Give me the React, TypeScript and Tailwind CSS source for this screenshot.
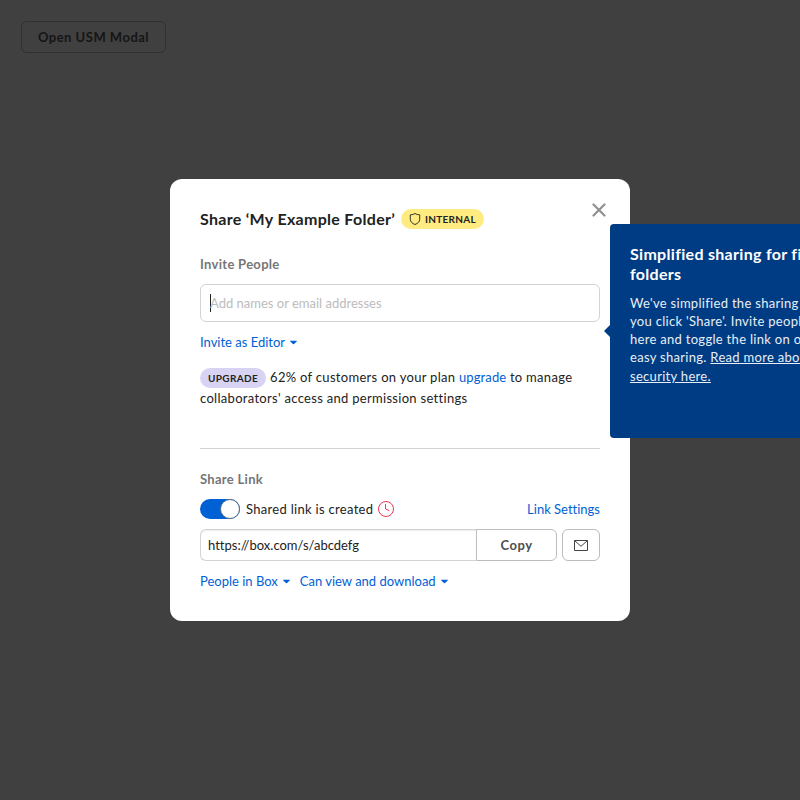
import React from "react";

function Caret() {
  return (
    <svg className="ml-[5px] h-[4px] w-[7px] translate-y-[0.5px]" viewBox="0 0 7 4" fill="#0061d5">
      <path d="M.4 0h6.200a.4.4 0 0 1 .3.650L3.800 3.800a.4.4 0 0 1-.6 0L.1.650A.4.4 0 0 1 .4 0Z" />
    </svg>
  );
}

function MenuLink({ children }: { children: React.ReactNode }) {
  return (
    <button className="flex h-5 items-center text-[13px] leading-5 whitespace-nowrap text-[#0061d5]">
      <span>{children}</span>
      <Caret />
    </button>
  );
}

function Shield() {
  return (
    <svg className="mr-1 h-3 w-3" viewBox="0 0 12 12" fill="none" stroke="#222" strokeWidth="0.9" strokeLinejoin="round">
      <path d="M6 .5C7.200 1.400 8.900 1.800 10.700 1.800v4.400c0 2.500-1.900 4.300-4.700 5.300C3.200 10.500 1.300 8.700 1.300 6.200V1.800C3.100 1.800 4.800 1.400 6 .5Z" />
    </svg>
  );
}

export default function App() {
  return (
    <div className="relative h-[800px] w-[800px] overflow-hidden bg-[#404040] font-['Lato',sans-serif] text-[13px] leading-5 tracking-[0.3px] text-[#222] [font-variant-ligatures:none]">
      <div className="flex px-[21px] pt-[21px]">
        <button className="h-8 w-[145px] rounded-[6px] border border-[#303030] text-[13px] font-bold tracking-[0.5px] whitespace-nowrap text-[#151515]">Open USM Modal</button>
      </div>

      <section className="relative mx-auto mt-[126px] h-[442px] w-[460px] rounded-[12px] bg-white px-[30px] pt-[30px]">
        <header className="flex h-5 items-center justify-between">
          <div className="flex items-center">
            <h1 className="w-[195px] text-base leading-5 font-bold whitespace-nowrap">Share ‘My Example Folder’</h1>
            <span className="ml-[6px] flex h-5 items-center rounded-full bg-[#ffeb7f] px-2 text-[10px] font-bold tracking-[0.3px]">
              <Shield />
              INTERNAL
            </span>
          </div>
          <button className="-mt-[18px] -mr-[6px]" aria-label="Close">
            <svg className="h-[14px] w-[14px]" viewBox="0 0 14 14" stroke="#909090" strokeWidth="2.2" strokeLinecap="round">
              <path d="M1.500 1.500 12.500 12.500M12.500 1.500 1.500 12.500" />
            </svg>
          </button>
        </header>

        <label className="mt-[25px] block h-5 font-bold text-[#767676]">Invite People</label>
        <div className="mt-[10px] flex h-[38px] items-center rounded-[6px] border border-[#d3d3d3] px-[9px]">
          <span className="h-[18px] w-px bg-[#222]" />
          <span className="-ml-px tracking-[0px] text-[#bcbcbc]">Add names or email addresses</span>
        </div>
        <div className="mt-[10px] flex tracking-[0px]">
          <MenuLink>Invite as Editor</MenuLink>
        </div>
        <p className="mt-[15px] leading-[21px]">
          <span className="mr-1 inline-block h-5 rounded-full bg-[#d9d3f3] px-2 text-[10px] leading-5 font-bold tracking-[0.35px]">UPGRADE</span>
          62% of customers on your plan <a className="tracking-[0.1px] text-[#0061d5]">upgrade</a> to manage collaborators' access and permission settings
        </p>
        <hr className="mt-[39px] border-[#d3d3d3]" />

        <h2 className="mt-5 h-5 font-bold text-[#767676]">Share Link</h2>
        <div className="mt-[10px] flex h-5 items-center">
          <span className="flex h-5 w-10 justify-end rounded-full bg-[#0061d5]">
            <span className="h-5 w-5 rounded-full border border-[#5b6c84] bg-white" />
          </span>
          <span className="ml-[6px] whitespace-nowrap">Shared link is created</span>
          <svg className="ml-1 h-[18px] w-[18px]" viewBox="0 0 18 18" fill="none" stroke="#ed3757">
            <circle cx="9" cy="9" r="7.500" />
            <path d="M8.500 4.500V9l3.500 1.500" strokeLinecap="round" />
          </svg>
          <a className="ml-auto tracking-[0px] text-[#0061d5]">Link Settings</a>
        </div>
        <div className="mt-[10px] flex h-8">
          <div className="flex w-[276px] items-center rounded-l-[6px] border border-r-0 border-[#d3d3d3] px-[7px] tracking-[0px] shadow-[inset_0_1px_1px_rgba(0,0,0,0.075)]">https://box.com/s/abcdefg</div>
          <button className="w-[81px] rounded-r-[6px] border border-[#bcbcbc] font-bold tracking-[0.5px] text-[#4e4e4e]">Copy</button>
          <button className="ml-[5px] flex w-[38px] items-center justify-center rounded-[6px] border border-[#bcbcbc]" aria-label="Email">
            <svg className="h-[11px] w-[14px]" viewBox="0 0 14 11" fill="none" stroke="#444">
              <path d="M.5.5h13v10H.5ZM.5.5 7 6.300 13.500.5" />
            </svg>
          </button>
        </div>
        <div className="mt-[10px] flex gap-[10px] tracking-[0px]">
          <MenuLink>People in Box</MenuLink>
          <MenuLink>Can view and download</MenuLink>
        </div>

        <aside className="absolute top-[45px] left-[440px] h-[214px] w-[280px] rounded-[4px] bg-[#003c84] p-5 text-white">
          <span className="absolute top-[101px] -left-[6px] border-y-[6px] border-r-[6px] border-y-transparent border-r-[#003c84]" />
          <h3 className="text-base leading-5 font-bold">Simplified sharing for files and<br />folders</h3>
          <p className="mt-[10px] leading-[18px] whitespace-nowrap text-[#e8eef5]">
            We've simplified the sharing experience<br />
            you click 'Share'. Invite people to this<br />
            here and toggle the link on or off for<br />
            easy sharing. <a className="underline">Read more about shared link</a><br />
            <a className="inline-block pt-px underline">security here.</a>
          </p>
        </aside>
      </section>
    </div>
  );
}
